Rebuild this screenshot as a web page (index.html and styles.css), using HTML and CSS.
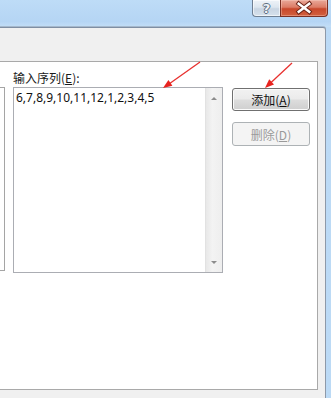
FILE: index.html
```html
<!DOCTYPE html>
<html lang="zh-CN">
<head>
<meta charset="utf-8">
<title>输入序列</title>
<link rel="stylesheet" href="styles.css">
</head>
<body>
<div class="window">
  <div class="titlebar">
    <div class="caption-buttons">
      <div class="cap-btn help"><span>?</span></div>
      <div class="cap-btn close">
        <svg width="48" height="18" viewBox="0 0 48 18">
          <path d="M18.5 4.5 L29.5 13 M29.5 4.5 L18.5 13" stroke="#6b2418" stroke-width="4.6" stroke-linecap="square" fill="none"/>
          <path d="M18.5 4.5 L29.5 13 M29.5 4.5 L18.5 13" stroke="#ffffff" stroke-width="2.6" stroke-linecap="square" fill="none"/>
        </svg>
      </div>
    </div>
  </div>
  <div class="frame">
    <div class="client">
      <div class="panel">
        <div class="listbox-edge"></div>
        <div class="seq-group">
          <div class="label">输入序列(<u>E</u>):</div>
          <div class="textbox">
            <div class="text">6,7,8,9,10,11,12,1,2,3,4,5</div>
            <div class="vscroll">
              <span class="arrow up"></span>
              <span class="arrow down"></span>
            </div>
          </div>
        </div>
        <div class="btn-col">
          <div class="btn">添加(<u>A</u>)</div>
          <div class="btn disabled">删除(<u>D</u>)</div>
        </div>
      </div>
    </div>
  </div>
  <svg class="annot" width="331" height="398" viewBox="0 0 331 398">
    <line x1="200" y1="62" x2="169" y2="84" stroke="#e8312f" stroke-width="1.3"/>
    <polygon points="163,88 172.4,85.7 168.4,79.9" fill="#e8231f"/>
    <line x1="292" y1="63" x2="270" y2="83.5" stroke="#e8312f" stroke-width="1.3"/>
    <polygon points="265,88 274,84.5 269.2,79.3" fill="#e8231f"/>
  </svg>
</div>
</body>
</html>
```
FILE: styles.css
```css
html, body {
  margin: 0;
  padding: 0;
}
body {
  width: 331px;
  height: 398px;
  overflow: hidden;
  font-family: "Noto Sans", "Noto Sans CJK SC", sans-serif;
  font-size: 12px;
  color: #111;
}
.window {
  position: relative;
  width: 331px;
  height: 398px;
  display: flex;
  flex-direction: column;
  background: linear-gradient(90deg, #b8d7f4 0%, #b3d3f3 60%, #bcdaf5 100%);
}
.titlebar {
  height: 27px;
  display: flex;
  justify-content: flex-end;
  align-items: flex-start;
  padding-right: 3px;
  background: linear-gradient(180deg, #bedcf7 0%, #b5d5f4 80%, #c3def6 100%);
}
.caption-buttons {
  display: flex;
  height: 18px;
}
.cap-btn {
  height: 17px;
  display: flex;
  align-items: center;
  justify-content: center;
  box-sizing: border-box;
}
.help {
  width: 28px;
  border: 1px solid #6f7f92;
  border-top: none;
  border-right: none;
  border-bottom-left-radius: 4px;
  background: linear-gradient(180deg, #eef3f8 0%, #dde6ef 45%, #c9d5e2 55%, #d6e1ec 100%);
  box-shadow: inset 0 0 0 1px rgba(255,255,255,0.6);
}
.help span {
  font-family: "DejaVu Sans", sans-serif;
  font-size: 13px;
  font-weight: bold;
  line-height: 15px;
  color: #eef2f6;
  text-shadow: 1px 0 0 #5d6d80, -1px 0 0 #5d6d80, 0 1px 0 #5d6d80, 0 -1px 0 #5d6d80;
}
.close {
  width: 48px;
  border: 1px solid #7a3024;
  border-top: none;
  border-bottom-right-radius: 4px;
  background: linear-gradient(180deg, #e9a899 0%, #dc7c66 45%, #c8472b 55%, #d2613f 100%);
  box-shadow: inset 0 0 0 1px rgba(255,220,210,0.35);
}
.close svg {
  display: block;
}
.frame {
  flex: 1;
  display: flex;
  padding-right: 5px;
}
.client {
  width: 326px;
  box-sizing: border-box;
  border-top: 1px solid #7f8ea2;
  border-right: 1px solid #8d99a8;
  border-top-right-radius: 3px;
  box-shadow: 0 -1px 0 #a5b8cc;
  background: #f0f0f0;
  padding-top: 33px;
  padding-right: 7px;
  display: flex;
  flex-direction: column;
}
.panel {
  height: 329px;
  box-sizing: border-box;
  border: 1px solid #a9a9a9;
  border-left: none;
  background: #ffffff;
  display: flex;
  align-items: flex-start;
}
.listbox-edge {
  width: 5px;
  height: 184px;
  margin-top: 25px;
  box-sizing: border-box;
  border: 1px solid #a5a5a5;
  border-left: none;
}
.seq-group {
  margin-left: 8px;
  display: flex;
  flex-direction: column;
}
.label {
  padding-top: 8px;
  line-height: 16px;
  height: 16px;
  font-family: "Noto Sans CJK SC", sans-serif;
  font-size: 12px;
  color: #1a1a1a;
  white-space: nowrap;
}
.label u, .btn u {
  text-underline-offset: 1px;
}
.textbox {
  margin-top: 1px;
  width: 210px;
  height: 186px;
  box-sizing: border-box;
  border: 1px solid #abadb3;
  display: flex;
}
.text {
  flex: 1;
  padding: 2px 0 0 2px;
  line-height: 15px;
  font-family: "Noto Sans", sans-serif;
  font-size: 12px;
  color: #111;
  white-space: nowrap;
}
.vscroll {
  width: 17px;
  box-sizing: border-box;
  background: linear-gradient(90deg, #e8e8e8 0%, #f3f3f3 40%, #eeeeee 100%);
  border-left: 1px solid #e2e2e2;
  display: flex;
  flex-direction: column;
  justify-content: space-between;
  align-items: center;
  padding: 9px 0 8px;
}
.arrow {
  width: 0;
  height: 0;
  border-left: 3px solid transparent;
  border-right: 3px solid transparent;
}
.arrow.up {
  border-bottom: 3px solid #8c8c8c;
}
.arrow.down {
  border-top: 3px solid #8c8c8c;
}
.btn-col {
  margin-left: 9px;
  margin-top: 26px;
  display: flex;
  flex-direction: column;
  gap: 11px;
}
.btn {
  width: 78px;
  height: 23px;
  box-sizing: border-box;
  border: 1px solid #707070;
  border-radius: 3px;
  background: linear-gradient(180deg, #f2f2f2 0%, #ebebeb 48%, #dddddd 52%, #cfcfcf 100%);
  box-shadow: inset 0 0 0 1px #fbfbfb;
  display: flex;
  align-items: center;
  justify-content: center;
  font-family: "Noto Sans CJK SC", sans-serif;
  font-size: 12px;
  color: #111;
}
.btn.disabled {
  height: 24px;
  border-color: #adb2b5;
  background: #f4f4f4;
  box-shadow: none;
  color: #9a9a9a;
}
.annot {
  position: absolute;
  left: 0;
  top: 0;
  pointer-events: none;
}
```
